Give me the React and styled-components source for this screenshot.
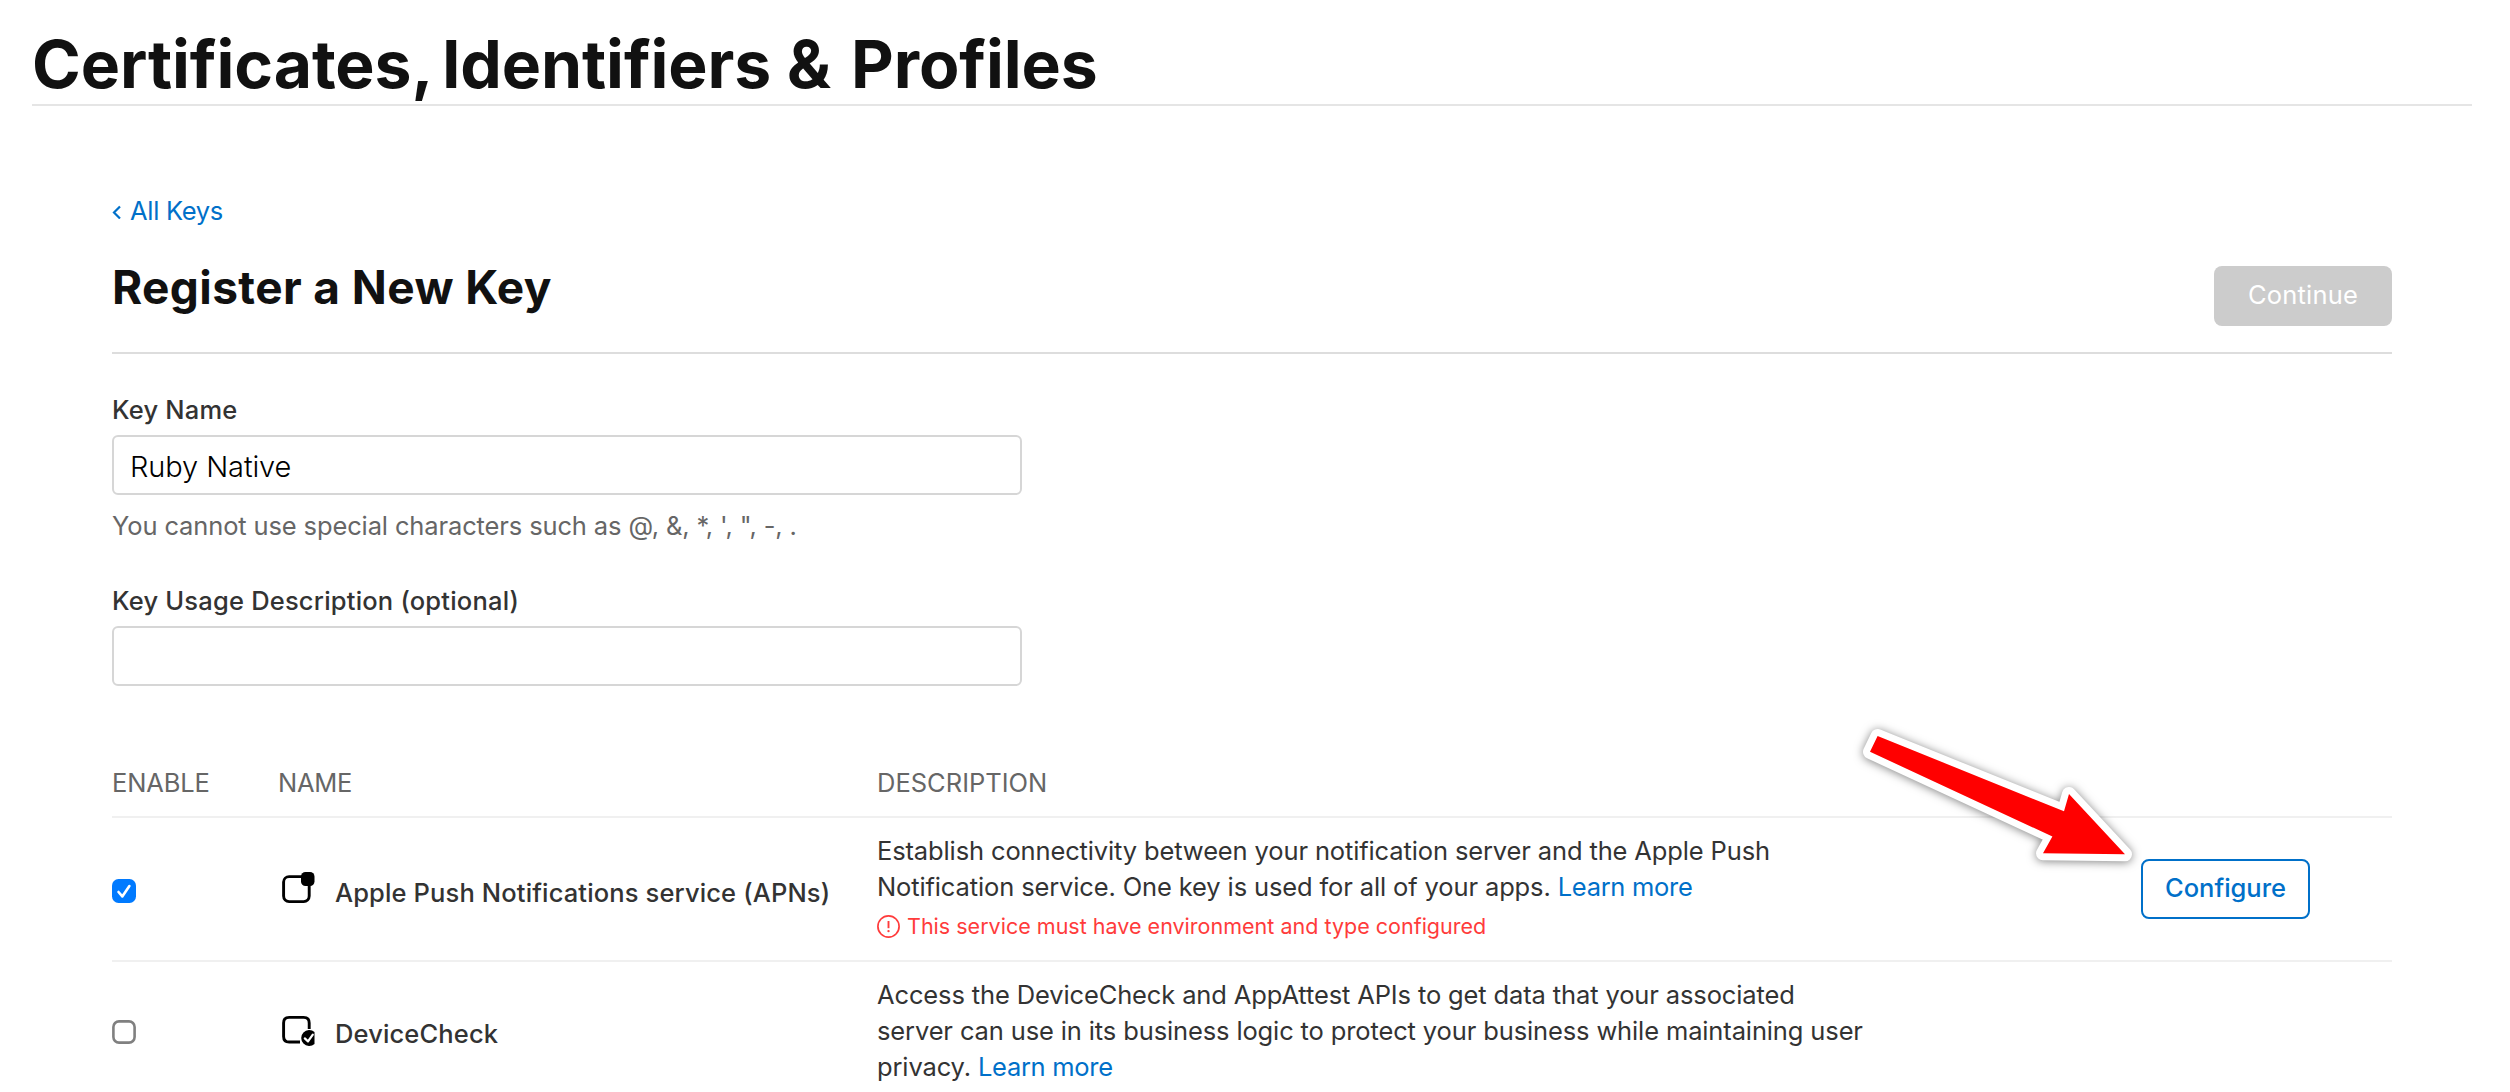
import React, { useState } from "react";
import styled, { createGlobalStyle } from "styled-components";

const GlobalStyle = createGlobalStyle`
  * { box-sizing: border-box; }
  body {
    margin: 0;
    background: #fff;
    color: #333;
    font-family: Inter, "Liberation Sans", sans-serif;
    font-size: 25.5px;
    line-height: 36px;
    overflow: hidden;
  }
`;

const Page = styled.div`
  position: relative;
  width: 2510px;
  height: 1092px;
  overflow: hidden;
`;

const PageHeader = styled.header`
  margin: 0 38px 0 32px;
  padding-top: 24px;
  border-bottom: 2px solid #e5e5e5;
`;

const PageTitle = styled.h1`
  margin: 0;
  color: #111;
  font-size: 66px;
  font-weight: 700;
  line-height: 80px;
  letter-spacing: -0.108px;
`;

const Kern = styled.span`
  letter-spacing: ${(p) => p.$spacing}px;
`;

const Main = styled.main`
  width: 2280px;
  margin-left: 112px;
  padding-top: 87px;
`;

const Link = styled.a`
  color: #0070c9;
  text-decoration: none;
`;

const InlineLink = styled(Link)`
  letter-spacing: -0.3px;
`;

const BackLink = styled(Link)`
  display: flex;
  align-items: center;
  gap: 9px;
  height: 36px;
  letter-spacing: -0.3px;
`;

const SectionHeader = styled.div`
  display: flex;
  align-items: flex-start;
  justify-content: space-between;
  height: 125px;
  padding-top: 30px;
  border-bottom: 2px solid #ddd;
`;

const SectionTitle = styled.h2`
  margin: 0;
  color: #111;
  font-size: 46px;
  font-weight: 700;
  line-height: 56px;
  letter-spacing: 0.4px;
`;

const Button = styled.button`
  display: flex;
  align-items: center;
  justify-content: center;
  height: 60px;
  padding: 0 0 2px;
  border-radius: 8px;
  font-family: inherit;
  font-size: 25.5px;
  line-height: 36px;
`;

const ContinueButton = styled(Button)`
  width: 178px;
  margin-top: 7px;
  border: 0;
  background: #ccc;
  color: #fff;
  letter-spacing: 0.19px;
`;

const ConfigureButton = styled(Button)`
  width: 169px;
  border: 2px solid #0070c9;
  background: #fff;
  color: #0070c9;
  font-weight: 500;
`;

const Field = styled.div`
  display: flex;
  flex-direction: column;
  width: 910px;
  margin-top: ${(p) => p.$top}px;
`;

const Label = styled.label`
  margin-bottom: 7px;
  font-weight: 500;
  letter-spacing: 0.2px;
`;

const TextInput = styled.input`
  height: 60px;
  padding: 2px 16px 0;
  border: 2px solid #d6d6d6;
  border-radius: 6px;
  outline: none;
  background: #fff;
  color: #000;
  font-family: inherit;
  font-size: 29px;
  font-weight: 300;
  letter-spacing: -0.1px;
`;

const Hint = styled.div`
  margin-top: 13px;
  color: #666;
  letter-spacing: -0.129px;
`;

const Table = styled.div`
  margin-top: 79px;
`;

const TableRow = styled.div`
  display: grid;
  grid-template-columns: 166px 599px 992px 1fr;
  align-items: center;
  height: ${(p) => p.$height}px;
  border-bottom: 2px solid #f0f0f0;
`;

const HeadRow = styled(TableRow)`
  align-items: start;
  color: #666;
`;

const HeadCell = styled.div`
  letter-spacing: ${(p) => p.$spacing || 0}px;
`;

const CheckCell = styled.button`
  display: flex;
  width: 24px;
  height: 24px;
  padding: 0;
  margin-top: 3px;
  border: 0;
  background: none;
`;

const NameCell = styled.div`
  display: flex;
  align-items: center;
  gap: 20px;
  padding: 7px 0 0 3px;
  font-weight: 500;
  letter-spacing: 0.135px;
`;

const DescriptionCell = styled.div`
  align-self: start;
  padding-top: 15px;
  letter-spacing: -0.13px;
`;

const ErrorLine = styled.div`
  display: flex;
  align-items: center;
  gap: 7px;
  margin-top: 6px;
  color: #ff3b3b;
  font-size: 21.5px;
  line-height: 30px;
  letter-spacing: 0.01px;
`;

const ActionCell = styled.div`
  padding-left: 272px;
`;

const Pointer = styled.svg`
  position: absolute;
  left: 1840px;
  top: 700px;
  overflow: visible;
  filter: drop-shadow(0 1px 5px rgba(0, 0, 0, 0.5));
`;

const ServiceIcon = styled.svg`
  display: block;
  flex: none;
  margin-bottom: ${(p) => p.$lift}px;
`;

function Chevron() {
  return (
    <svg width="9" height="16" viewBox="0 0 9 16" fill="none" stroke="currentColor" strokeWidth="2.2">
      <path d="M8 3.5 L2 9.5 L8 15.5" />
    </svg>
  );
}

function Checkbox({ initial }) {
  const [checked, setChecked] = useState(initial);
  return (
    <CheckCell role="checkbox" aria-checked={checked} onClick={() => setChecked(!checked)}>
      <svg width="24" height="24" viewBox="0 0 24 24" fill="none">
        {checked ? (
          <>
            <rect width="24" height="24" rx="6.5" fill="#007aff" />
            <path d="M6.5 13 L10.3 17.4 L17.4 7" stroke="#fff" strokeWidth="2.6" strokeLinecap="round" strokeLinejoin="round" />
          </>
        ) : (
          <rect x="1.4" y="1.4" width="21.2" height="21.2" rx="5.6" stroke="#808080" strokeWidth="2.6" />
        )}
      </svg>
    </CheckCell>
  );
}

function PushIcon() {
  return (
    <ServiceIcon $lift={12} width="34" height="34" viewBox="0 0 34 34" fill="none">
      <rect x="2.6" y="6.6" width="25.6" height="25" rx="5.5" stroke="#000" strokeWidth="2.9" />
      <rect x="20" y="2" width="13.5" height="14" rx="4.5" fill="#000" />
    </ServiceIcon>
  );
}

function DeviceCheckIcon() {
  return (
    <ServiceIcon $lift={9} width="34" height="34" viewBox="0 0 34 34" fill="none">
      <path d="M28.2 16 V10 Q28.2 4.4 22.6 4.4 H8.2 Q2.6 4.4 2.6 10 V23.4 Q2.6 29 8.2 29 H19" stroke="#000" strokeWidth="2.9" />
      <path d="M33.5 19 A8 8 0 1 0 33.5 31 Z" fill="#000" />
      <path d="M23.8 25.4 L27 28.4 L31.8 21.6" stroke="#fff" strokeWidth="2.2" strokeLinecap="round" strokeLinejoin="round" />
    </ServiceIcon>
  );
}

function AlertIcon() {
  return (
    <svg width="23" height="23" viewBox="0 0 23 23" fill="none" stroke="currentColor">
      <circle cx="11.5" cy="11.5" r="10.6" strokeWidth="1.7" />
      <path d="M11.5 6 V13.2" strokeWidth="1.9" />
      <circle cx="11.5" cy="16.1" r="1.2" fill="currentColor" stroke="none" />
    </svg>
  );
}

function Arrow() {
  const points = "37.6,36 224,111.3 229,94 285,154.3 203,153.3 212.4,136.5 30,51.8";
  return (
    <Pointer width="300" height="170" viewBox="0 0 300 170">
      <polygon points={points} fill="#fff" stroke="#fff" strokeWidth="14" strokeLinejoin="round" />
      <polygon points={points} fill="#f00" />
    </Pointer>
  );
}

export default function App() {
  const [name, setName] = useState("Ruby Native");
  const [usage, setUsage] = useState("");
  return (
    <Page>
      <GlobalStyle />
      <PageHeader>
        <PageTitle>
          Certificates<Kern $spacing={-7}>,</Kern> Identifiers <Kern $spacing={4.5}>&amp;</Kern> Profiles
        </PageTitle>
      </PageHeader>
      <Main>
        <BackLink>
          <Chevron />
          All Keys
        </BackLink>
        <SectionHeader>
          <SectionTitle>Register a New Key</SectionTitle>
          <ContinueButton>Continue</ContinueButton>
        </SectionHeader>

        <Field $top={38}>
          <Label>Key Name</Label>
          <TextInput value={name} onChange={(e) => setName(e.target.value)} />
          <Hint>You cannot use special characters such as @, &amp;, *, ', ", -, .</Hint>
        </Field>
        <Field $top={39}>
          <Label>Key Usage Description (optional)</Label>
          <TextInput value={usage} onChange={(e) => setUsage(e.target.value)} />
        </Field>

        <Table>
          <HeadRow $height={53}>
            <HeadCell $spacing={-0.15}>ENABLE</HeadCell>
            <HeadCell $spacing={-0.3}>NAME</HeadCell>
            <HeadCell>DESCRIPTION</HeadCell>
          </HeadRow>
          <TableRow $height={144}>
            <Checkbox initial={true} />
            <NameCell>
              <PushIcon />
              Apple Push Notifications service (APNs)
            </NameCell>
            <DescriptionCell>
              Establish connectivity between your notification server and the Apple Push Notification service. One key
              is used for all of your apps. <InlineLink>Learn more</InlineLink>
              <ErrorLine>
                <AlertIcon />
                This service must have environment and type configured
              </ErrorLine>
            </DescriptionCell>
            <ActionCell>
              <ConfigureButton>Configure</ConfigureButton>
            </ActionCell>
          </TableRow>
          <TableRow $height={139}>
            <Checkbox initial={false} />
            <NameCell>
              <DeviceCheckIcon />
              DeviceCheck
            </NameCell>
            <DescriptionCell>
              Access the DeviceCheck and AppAttest APIs to get data that your associated server can use in its business
              logic to protect your business while maintaining user privacy. <InlineLink>Learn more</InlineLink>
            </DescriptionCell>
          </TableRow>
        </Table>
      </Main>
      <Arrow />
    </Page>
  );
}
